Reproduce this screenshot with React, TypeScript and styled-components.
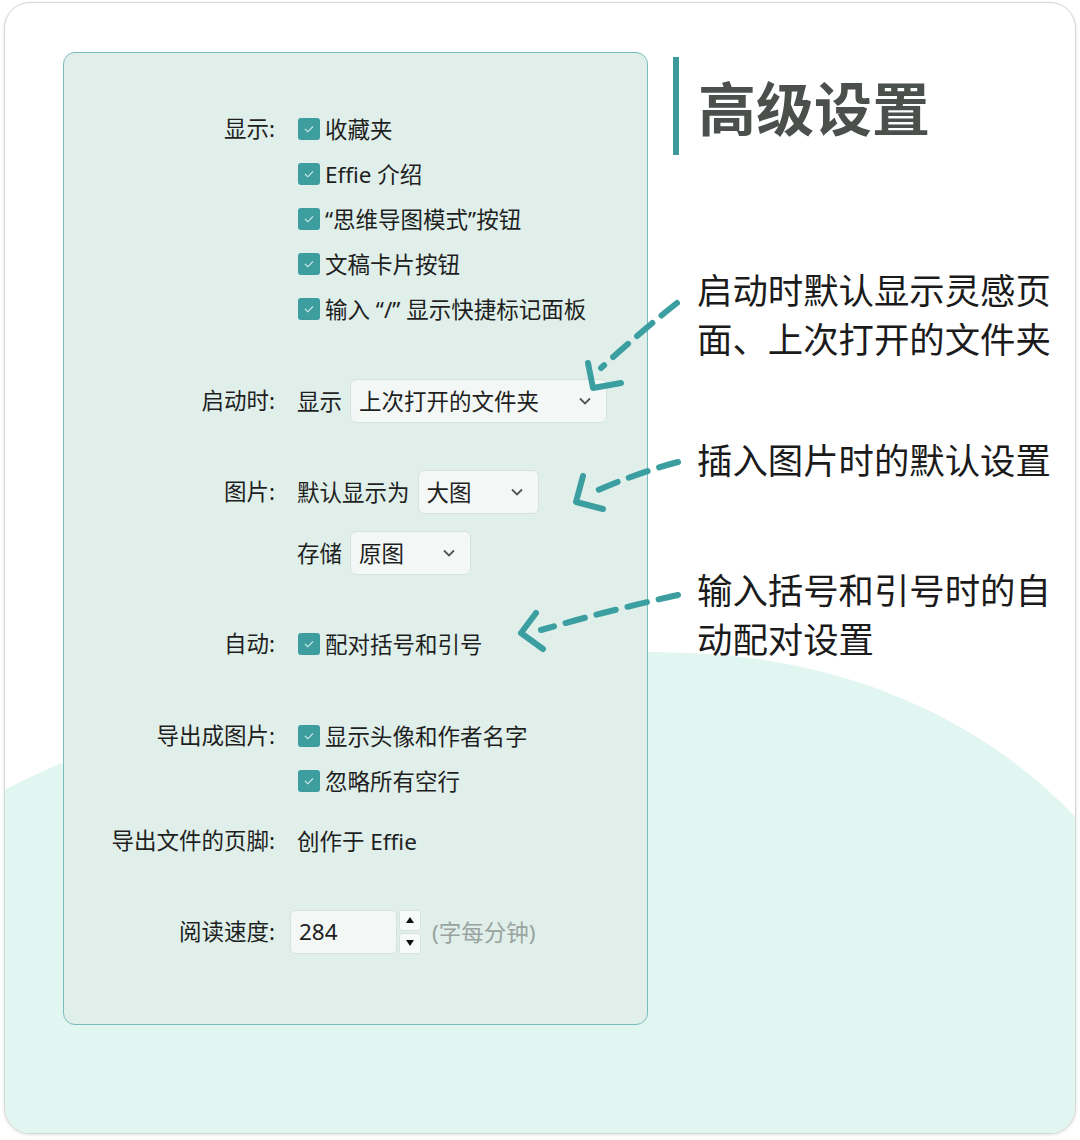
import React from 'react';
import styled, { createGlobalStyle } from 'styled-components';

const GlobalStyle = createGlobalStyle`
  html, body { margin: 0; padding: 0; background: #ffffff; }
  body { font-family: "Noto Sans", "Noto Sans CJK SC", sans-serif; }
`;

// Layout
const Page = styled.div`
  position: relative;
  width: 1080px;
  height: 1140px;
  padding: 2px 4px 0;
  box-sizing: border-box;
`;

const Card = styled.div`
  position: relative;
  width: 1072px;
  height: 1132px;
  box-sizing: border-box;
  border: 1px solid #d3d9d7;
  border-radius: 26px;
  box-shadow: 0 1px 3px rgba(0, 0, 0, 0.12);
  background: #ffffff;
  overflow: hidden;
  display: flex;
  align-items: flex-start;
  padding: 49px 0 0 58px;
`;

const Wave = styled.svg`
  position: absolute;
  left: 0;
  top: 0;
  z-index: 0;
`;

const Overlay = styled.svg`
  position: absolute;
  left: 0;
  top: 0;
  z-index: 3;
  pointer-events: none;
`;

// Settings panel
const Panel = styled.div`
  position: relative;
  z-index: 1;
  width: 585px;
  height: 973px;
  box-sizing: border-box;
  border: 1px solid #79bcbc;
  border-radius: 12px;
  background: #e0efea;
  padding-top: 53px;
  display: flex;
  flex-direction: column;
  font-size: 22.5px;
  color: #1f1f1f;
`;

const Section = styled.div<{ $top: number }>`
  display: grid;
  grid-template-columns: 211px 1fr;
  column-gap: 22px;
  margin-top: ${p => p.$top}px;
`;

const Label = styled.div`
  text-align: right;
  height: 45px;
  line-height: 45px;
  white-space: nowrap;
`;

const Lines = styled.div<{ $gap?: number }>`
  display: flex;
  flex-direction: column;
  gap: ${p => p.$gap ?? 0}px;
`;

const Line = styled.div`
  display: flex;
  align-items: center;
  height: 45px;
  gap: 8px;
  white-space: nowrap;
`;

const CheckLine = styled(Line)`
  gap: 5px;
`;

const Box = styled.span`
  display: inline-flex;
  align-items: center;
  justify-content: center;
  width: 22px;
  height: 22px;
  margin-left: 1px;
  border-radius: 3px;
  background: #3e9e9f;
`;

const Select = styled.div<{ $w: number }>`
  display: flex;
  align-items: center;
  justify-content: space-between;
  width: ${p => p.$w}px;
  height: 44px;
  box-sizing: border-box;
  padding: 0 15px 0 8px;
  border: 1px solid #d4e1dc;
  border-radius: 6px;
  background: #f3f8f6;
`;

const NumberBox = styled.div`
  display: flex;
  align-items: center;
  width: 107px;
  height: 44px;
  box-sizing: border-box;
  margin-left: -7px;
  padding-left: 8px;
  border: 1px solid #d4e1dc;
  border-radius: 5px;
  background: #f3f8f6;
`;

const Spinner = styled.div`
  display: flex;
  flex-direction: column;
  gap: 2px;
  margin-left: -6px;
`;

const SpinButton = styled.div`
  display: flex;
  align-items: center;
  justify-content: center;
  width: 22px;
  height: 21px;
  box-sizing: border-box;
  border: 1px solid #d8e3df;
  border-radius: 3px;
  background: #f6faf9;
`;

const Hint = styled.span`
  color: #9aa3a0;
  margin-left: 3px;
`;

// Right column
const Side = styled.div`
  position: relative;
  z-index: 1;
  margin-left: 25px;
  padding-top: 5px;
  display: flex;
  flex-direction: column;
`;

const TitleRow = styled.div`
  display: flex;
  align-items: center;
`;

const Bar = styled.div`
  width: 6px;
  height: 98px;
  background: #3c9a9c;
`;

const Title = styled.h1`
  margin: 0 0 0 19px;
  font-size: 58px;
  line-height: 1;
  font-weight: 700;
  color: #4b504c;
  font-family: "Noto Sans CJK SC", sans-serif;
`;

const Note = styled.p<{ $top: number }>`
  margin: ${p => p.$top}px 0 0 24px;
  font-size: 35.4px;
  line-height: 49px;
  color: #1b1b1b;
  font-family: "Noto Sans CJK SC", sans-serif;
  white-space: nowrap;
`;

const Check = () => (
  <Box>
    <svg width="22" height="22" viewBox="0 0 22 22">
      <polyline points="7,11 9.8,13.8 15,8.5" fill="none" stroke="#cdeaea" strokeWidth="1.1" />
    </svg>
  </Box>
);

const Chevron = () => (
  <svg width="12" height="8" viewBox="0 0 12 8">
    <polyline points="1,1.5 6,6.5 11,1.5" fill="none" stroke="#555" strokeWidth="1.8" />
  </svg>
);

const CheckItem: React.FC<{ text: string }> = ({ text }) => (
  <CheckLine>
    <Check />
    <span>{text}</span>
  </CheckLine>
);

const DISPLAY_ITEMS = ['收藏夹', 'Effie 介绍', '“思维导图模式”按钮', '文稿卡片按钮', '输入 “/” 显示快捷标记面板'];

const ARROWS = [
  { line: 'M677,303 Q645,328 601,368', head: 'M588,363 L593,388 L621,383' },
  { line: 'M678,462 Q640,472 598,490', head: 'M583,476 L576,502 L603,509' },
  { line: 'M678,595 Q610,610 541,630', head: 'M536,613 L521,633 L543,649' },
];

const App: React.FC = () => (
  <Page>
    <GlobalStyle />
    <Card>
      <Wave width="1070" height="1130" viewBox="5 3 1070 1130">
        <path
          d="M0,792 C200,690 450,645 690,653 C870,660 1000,735 1080,822 L1080,1140 L0,1140 Z"
          fill="#e1f5f1"
        />
      </Wave>

      <Panel>
        <Section $top={0}>
          <Label>显示:</Label>
          <Lines>
            {DISPLAY_ITEMS.map(t => (
              <CheckItem key={t} text={t} />
            ))}
          </Lines>
        </Section>

        <Section $top={47}>
          <Label>启动时:</Label>
          <Lines>
            <Line>
              <span>显示</span>
              <Select $w={257}>
                <span>上次打开的文件夹</span>
                <Chevron />
              </Select>
            </Line>
          </Lines>
        </Section>

        <Section $top={46}>
          <Label>图片:</Label>
          <Lines $gap={16}>
            <Line>
              <span>默认显示为</span>
              <Select $w={121}>
                <span>大图</span>
                <Chevron />
              </Select>
            </Line>
            <Line>
              <span>存储</span>
              <Select $w={121}>
                <span>原图</span>
                <Chevron />
              </Select>
            </Line>
          </Lines>
        </Section>

        <Section $top={46}>
          <Label>自动:</Label>
          <Lines>
            <CheckItem text="配对括号和引号" />
          </Lines>
        </Section>

        <Section $top={47}>
          <Label>导出成图片:</Label>
          <Lines>
            <CheckItem text="显示头像和作者名字" />
            <CheckItem text="忽略所有空行" />
          </Lines>
        </Section>

        <Section $top={15}>
          <Label>导出文件的页脚:</Label>
          <Lines>
            <Line>
              <span>创作于 Effie</span>
            </Line>
          </Lines>
        </Section>

        <Section $top={46}>
          <Label>阅读速度:</Label>
          <Lines>
            <Line>
              <NumberBox>284</NumberBox>
              <Spinner>
                <SpinButton>
                  <svg width="8" height="6" viewBox="0 0 8 6">
                    <polygon points="4,0 8,6 0,6" fill="#111" />
                  </svg>
                </SpinButton>
                <SpinButton>
                  <svg width="8" height="6" viewBox="0 0 8 6">
                    <polygon points="0,0 8,0 4,6" fill="#111" />
                  </svg>
                </SpinButton>
              </Spinner>
              <Hint>(字每分钟)</Hint>
            </Line>
          </Lines>
        </Section>
      </Panel>

      <Side>
        <TitleRow>
          <Bar />
          <Title>高级设置</Title>
        </TitleRow>
        <Note $top={109}>
          启动时默认显示灵感页
          <br />
          面、上次打开的文件夹
        </Note>
        <Note $top={72}>插入图片时的默认设置</Note>
        <Note $top={81}>
          输入括号和引号时的自
          <br />
          动配对设置
        </Note>
      </Side>
    </Card>

    <Overlay width="1080" height="1140" viewBox="0 0 1080 1140">
      {ARROWS.map((a, i) => (
        <g key={i} fill="none" stroke="#3b9ea0" strokeWidth="6" strokeLinecap="round" strokeLinejoin="round">
          <path d={a.line} strokeDasharray="20 12" />
          <path d={a.head} />
        </g>
      ))}
    </Overlay>
  </Page>
);

export default App;
